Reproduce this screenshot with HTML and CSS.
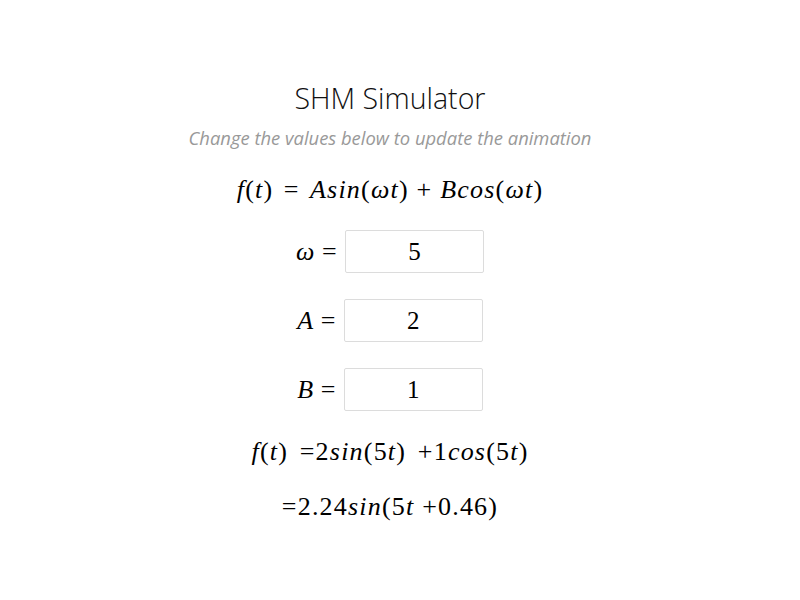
FILE: index.html
```html
<!DOCTYPE html>
<html>
<head>
<meta charset="utf-8">
<link rel="stylesheet" href="styles.css">
</head>
<body>
<div class="app">
  <h1 class="title">SHM Simulator</h1>
  <p class="subtitle">Change the values below to update the animation</p>
  <div class="math formula"><i>f</i>(<i>t</i>)<span class="rel">=</span><i>Asin</i>(<i>ωt</i>)<span class="bin">+</span><i>Bcos</i>(<i>ωt</i>)</div>
  <div class="row row-first"><span class="math label"><i>ω</i><span class="rel">=</span></span><div class="field">5</div></div>
  <div class="row"><span class="math label"><i>A</i><span class="rel">=</span></span><div class="field">2</div></div>
  <div class="row"><span class="math label"><i>B</i><span class="rel">=</span></span><div class="field">1</div></div>
  <div class="math result"><i>f</i>(<i>t</i>) =2<i>sin</i>(5<i>t</i>) +1<i>cos</i>(5<i>t</i>)</div>
  <div class="math result2">=2.24<i>sin</i>(5<i>t</i> +0.46)</div>
</div>
</body>
</html>
```
FILE: styles.css
```css
html, body { margin: 0; padding: 0; background: #fff; }
.app {
  display: flex;
  flex-direction: column;
  align-items: center;
  padding-top: 80px;
  padding-right: 20px;
}
.title {
  font-family: "Open Sans", "Noto Sans", sans-serif;
  font-weight: 300;
  font-size: 28.5px;
  line-height: 36px;
  margin: 0;
  color: #111;
}
.subtitle {
  font-family: "Open Sans", "Noto Sans", sans-serif;
  font-style: italic;
  font-size: 18.4px;
  line-height: 24px;
  color: #999;
  margin: 10px 0 0 0;
}
.math {
  font-family: "Liberation Serif", "DejaVu Serif", serif;
  font-size: 26px;
  letter-spacing: 1.2px;
  color: #000;
  line-height: 34px;
}
.math i { font-style: italic; }
.rel { margin: 0 0.4em; }
.bin { margin: 0 0.3em; }
.formula { margin-top: 23px; }
.row {
  display: flex;
  align-items: center;
  gap: 7px;
  margin-top: 26px;
}
.row-first { margin-top: 23px; }
.label .rel { margin: 0 0 0 0.25em; }
.field {
  box-sizing: border-box;
  width: 139px;
  height: 43px;
  border: 1px solid #dcdcdc;
  border-radius: 2px;
  display: flex;
  align-items: center;
  justify-content: center;
  font-family: "Liberation Serif", serif;
  font-size: 25px;
  color: #000;
}
.result { margin-top: 24px; word-spacing: 4px; }
.result2 { margin-top: 21px; }
```
